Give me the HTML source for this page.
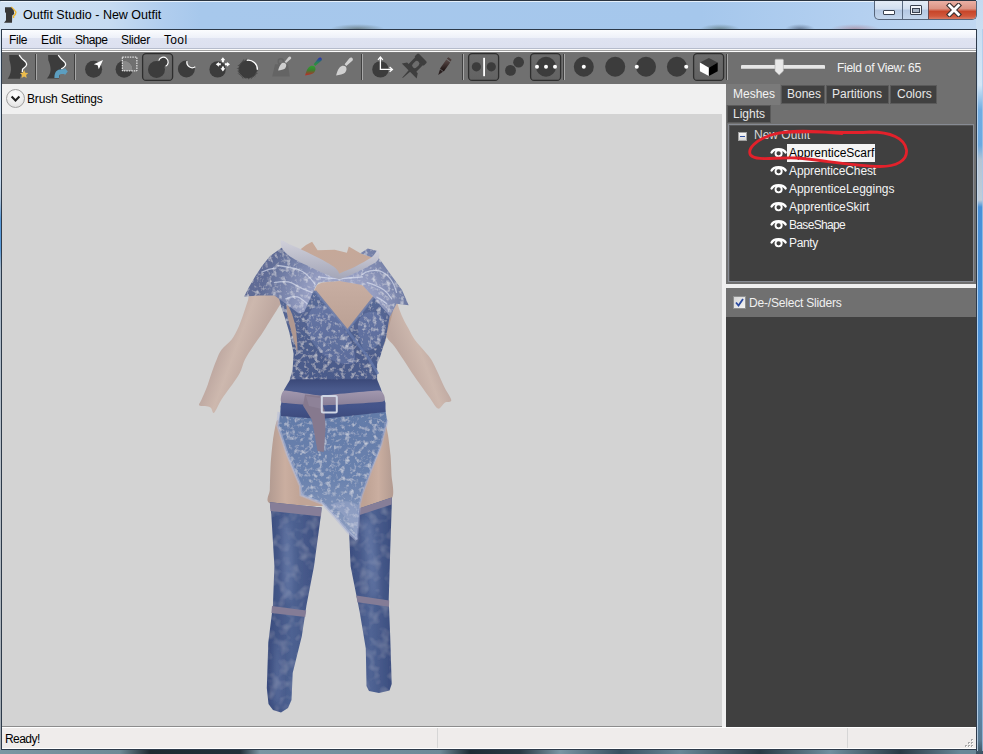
<!DOCTYPE html>
<html><head><meta charset="utf-8">
<style>
*{margin:0;padding:0;box-sizing:border-box}
html,body{width:983px;height:754px;overflow:hidden;background:#3d5560}
body{position:relative;font-family:"Liberation Sans",sans-serif;font-size:12px}
.a{position:absolute}
.t{position:absolute;white-space:nowrap;line-height:1}
</style></head><body>
<!-- desktop strip bottom -->
<div class="a" style="left:0;top:749px;width:983px;height:5px;background:linear-gradient(90deg,#7c97a3 0,#6e8a96 120px,#1f2a30 150px,#22303a 240px,#7a96a3 260px,#6d8a98 440px,#1e2c34 470px,#2a3a44 520px,#7a96a4 560px,#385060 620px,#6a8898 680px,#2a3a44 760px,#7090a0 830px,#2a3a44 900px,#6a8898 960px)"></div>
<!-- window frame (glass) -->
<div class="a" style="left:0;top:0;width:983px;height:750px;background:#a9c9ec;border-top:1px solid #2a3440"></div>
<!-- title glow -->
<div class="a" style="left:0;top:1px;width:983px;height:28px;background:linear-gradient(90deg,#d0e1f3 0,#c6dbf1 110px,#b0cdee 165px,#a7c8ec 200px,#a5c7ec 700px,#b4d0f0 860px,#c0d8f2 975px)"></div>
<div class="a" style="left:330px;top:24px;width:55px;height:5px;background:radial-gradient(ellipse at 50% 100%,rgba(70,80,70,.55),rgba(70,80,70,0) 70%)"></div>
<div class="a" style="left:700px;top:24px;width:40px;height:5px;background:radial-gradient(ellipse at 50% 100%,rgba(60,80,70,.5),rgba(60,80,70,0) 70%)"></div>
<div class="a" style="left:785px;top:24px;width:30px;height:5px;background:radial-gradient(ellipse at 50% 100%,rgba(40,50,70,.5),rgba(40,50,70,0) 70%)"></div>
<div class="a" style="left:830px;top:24px;width:50px;height:5px;background:radial-gradient(ellipse at 50% 100%,rgba(160,60,60,.35),rgba(160,60,60,0) 70%)"></div>
<!-- right frame -->
<div class="a" style="left:976px;top:0;width:7px;height:754px;background:linear-gradient(180deg,#c4daf0 0,#d4e6f6 85px,#70ace2 110px,#6aa8e0 145px,#b4c4d4 160px,#c0ccd8 200px,#4890d8 207px,#4890d8 660px,#5a88b0 700px,#5a7a92 740px,#3a5060 754px)"></div>
<div class="a" style="left:976px;top:29px;width:1px;height:722px;background:#2e3c4c"></div>
<div class="a" style="left:977px;top:29px;width:1px;height:722px;background:#c8dcf0;opacity:.8"></div>
<div class="a" style="left:982px;top:29px;width:1px;height:722px;background:#a8c8e8;opacity:.7"></div>
<!-- app icon -->
<div class="a" style="left:1px;top:1px;width:975px;height:1px;background:rgba(245,250,255,.8)"></div>
<svg class="a" style="left:0;top:0" width="20" height="26" viewBox="0 0 20 26">
<path d="M11.2 7.1 L14.4 10.2 L15.9 12.2 L15.2 14.6 L13.5 16.2 L13.6 18" fill="none" stroke="#f0b830" stroke-width="1.4"/>
<path d="M5 7.2 H11 L13.8 10.4 L14.2 13.9 L12.2 15.6 L12 22.7 H4 L6 20.3 V13.2 L5 12 Z" fill="#383838"/>
</svg>
<div class="t" style="left:23px;top:9px;font-size:12.5px;color:#000">Outfit Studio - New Outfit</div>
<!-- caption buttons -->
<div class="a" style="left:874px;top:1px;width:103px;height:19px;border:1px solid #56657a;border-top:none;border-radius:0 0 5px 5px;overflow:hidden;background:linear-gradient(#e4ecf6,#d2dff0 45%,#b4c8e2 50%,#c4d6ec)">
  <div class="a" style="left:27px;top:0;width:1px;height:19px;background:#5a6a80"></div>
  <div class="a" style="left:54px;top:0;width:48px;height:19px;background:linear-gradient(#eab0a4,#dc9484 40%,#c8462a 55%,#d0583c 80%,#dc8874)"></div>
  <div class="a" style="left:53px;top:0;width:1px;height:19px;background:#6a4a50"></div>
</div>
<div class="a" style="left:883px;top:10px;width:12px;height:5px;background:#fff;border:1px solid #3a4250;border-radius:1px"></div>
<div class="a" style="left:910px;top:5px;width:12px;height:10px;border:1px solid #3a4250;border-radius:1px;background:#f4f6fa"></div>
<div class="a" style="left:912px;top:8px;width:8px;height:5px;border:1px solid #3a4250;background:#a8b4c4"></div>
<svg class="a" style="left:946px;top:3px" width="16" height="14" viewBox="0 0 16 14"><path d="M3.5 2.5 L12.5 11.5 M12.5 2.5 L3.5 11.5" stroke="#3a3030" stroke-width="5" stroke-linecap="square"/><path d="M3.5 2.5 L12.5 11.5 M12.5 2.5 L3.5 11.5" stroke="#fff" stroke-width="2.8" stroke-linecap="square"/></svg>
<div class="a" style="left:0;top:29px;width:1px;height:721px;background:linear-gradient(#dce8f4,#c8dcf0 150px,#b0c4d8 170px,#5a9ad8 190px,#5a9ad8 220px,#a8b8c8 240px,#b8c0c8 440px,#a0a8b0 740px)"></div>
<!-- client area -->
<div class="a" style="left:1px;top:29px;width:976px;height:721px;border:1px solid #2d3a4a;background:#f0f0f0"></div>
<!-- menu bar -->
<div class="a" style="left:2px;top:30px;width:974px;height:19px;background:linear-gradient(#fbfcfe,#eef1f9 40%,#dfe3f1 45%,#dce0ef)"></div>
<div class="a" style="left:2px;top:48px;width:974px;height:1px;background:#b6bccc"></div>
<div class="a" style="left:2px;top:49px;width:974px;height:1px;background:#fafafa"></div>
<div class="a" style="left:2px;top:50px;width:974px;height:1px;background:#a0a0a0"></div>
<div class="a" style="left:2px;top:51px;width:974px;height:1px;background:#fcfcfc"></div>
<div class="t" style="left:9px;top:34px;color:#000;letter-spacing:-0.3px">File</div>
<div class="t" style="left:41px;top:34px;color:#000">Edit</div>
<div class="t" style="left:75px;top:34px;color:#000;letter-spacing:-0.45px">Shape</div>
<div class="t" style="left:121px;top:34px;color:#000;letter-spacing:-0.3px">Slider</div>
<div class="t" style="left:164px;top:34px;color:#000;letter-spacing:0.35px">Tool</div>
<!-- toolbar -->
<div class="a" style="left:2px;top:52px;width:974px;height:32px;background:#707070"></div>
<svg class="a" style="left:0;top:52px" width="983" height="32" viewBox="0 52 983 32">
<defs>
<linearGradient id="btnbg" x1="0" y1="0" x2="0" y2="1"><stop offset="0" stop-color="#6c6c6c"/><stop offset="1" stop-color="#626262"/></linearGradient>
<linearGradient id="cbr" x1="0" y1="0" x2="0" y2="1"><stop offset="0" stop-color="#2030c0"/><stop offset="0.35" stop-color="#30a030"/><stop offset="0.65" stop-color="#2e9a2e"/><stop offset="1" stop-color="#c03030"/></linearGradient>
<linearGradient id="pencil" x1="0" y1="0" x2="0" y2="1"><stop offset="0" stop-color="#5a4a48"/><stop offset="1" stop-color="#1a1010"/></linearGradient>
</defs>
<rect x="2" y="52" width="974" height="1" fill="#777"/>
<!-- separators -->
<g fill="#404040"><rect x="35" y="54" width="1" height="26"/><rect x="74" y="54" width="1" height="26"/><rect x="361" y="54" width="1" height="26"/><rect x="462" y="54" width="1" height="26"/><rect x="563" y="54" width="1" height="26"/><rect x="726" y="54" width="1" height="26"/></g>
<g fill="#a8a8a8"><rect x="36" y="54" width="1" height="26"/><rect x="75" y="54" width="1" height="26"/><rect x="362" y="54" width="1" height="26"/><rect x="463" y="54" width="1" height="26"/><rect x="564" y="54" width="1" height="26"/><rect x="727" y="54" width="1" height="26"/></g>
<!-- selected buttons -->
<g fill="url(#btnbg)" stroke="#2e2e2e" stroke-width="1.3">
<rect x="142.6" y="53.6" width="30" height="26.8" rx="3.5"/>
<rect x="468.6" y="53.6" width="30" height="26.8" rx="3.5"/>
<rect x="530.6" y="53.6" width="30" height="26.8" rx="3.5"/>
<rect x="693.6" y="53.6" width="30" height="26.8" rx="3.5"/>
</g>
<!-- icon 1 -->
<path d="M9.2 55 H19.1 C20.5 56.5 21.5 58.6 23.5 60 C25.5 61.5 26.8 62.8 26.6 64.8 C26.4 66.6 24.4 67.6 22.9 68.8 L22.1 71.5 L19.9 78.7 H7.6 C9 77 10.6 74 11 70 C11.2 67 10.4 63 9.4 60 Z" fill="#3c3c3c"/>
<path d="M19.1 55 C20.5 56.5 21.5 58.6 23.5 60 C25.5 61.5 26.8 62.8 26.6 64.8 C26.4 66.6 24.4 67.6 22.9 68.8 C22.2 69.5 22.3 71 22.3 72" fill="none" stroke="#fff" stroke-width="1.3"/>
<path d="M24.10 70.00 L25.33 72.70 L28.28 73.04 L26.10 75.05 L26.69 77.96 L24.10 76.50 L21.51 77.96 L22.10 75.05 L19.92 73.04 L22.87 72.70 Z" fill="#ecbc4c"/>
<!-- icon 2 -->
<path d="M48.1 55.1 H58.2 C59.6 56.6 60.4 58.6 62.4 60 C64.4 61.5 65.8 62.8 65.6 64.8 C65.4 66.6 63.4 67.8 61.2 68.9 L59 78.5 H46.8 C48.5 76.5 50.3 74 50.6 70 C50.8 67 49.6 63 48.3 60.2 Z" fill="#3c3c3c"/>
<path d="M58.2 55.1 C59.6 56.6 60.4 58.6 62.4 60 C64.4 61.5 65.8 62.8 65.6 64.8 C65.4 66.6 63.4 67.8 61.2 68.9" fill="none" stroke="#fff" stroke-width="1.3"/>
<path d="M54.4 78 C54.4 72 57 69.3 61.5 69.3 L64.6 69.3 L64.6 67.8 L67.8 71.4 L64.6 75.4 L64.6 74 L61.5 74 C59.5 74 59 75.5 59 78 Z" fill="#5c9ec0"/>
<!-- circle icons -->
<g fill="#3c3c3c">
<circle cx="93.6" cy="69.3" r="8.5"/>
<circle cx="124.1" cy="69.3" r="8.5"/>
<circle cx="156.5" cy="69.5" r="8.5"/>
<circle cx="217.6" cy="69.4" r="8.2"/>
<circle cx="380.4" cy="69.4" r="8.2"/>
<circle cx="476.4" cy="66.8" r="4.6"/><circle cx="491.3" cy="66.8" r="4.6"/>
<circle cx="510.5" cy="70.4" r="5.4"/><circle cx="518.6" cy="62.2" r="5.4"/>
<circle cx="546" cy="66.8" r="10"/>
<circle cx="583.8" cy="66.8" r="10"/>
<circle cx="615.2" cy="66.8" r="10"/>
<circle cx="646" cy="66.8" r="10"/>
<circle cx="676.9" cy="66.8" r="10"/>
</g>
<!-- moon -->
<mask id="moonm"><rect x="170" y="52" width="40" height="32" fill="#fff"/><circle cx="192.2" cy="61.6" r="5.4" fill="#000"/></mask>
<circle cx="186.4" cy="69.1" r="8.5" fill="#3c3c3c" mask="url(#moonm)"/>
<path d="M187 61.2 A5.4 5.4 0 0 0 195.3 66.8" fill="none" stroke="#fff" stroke-width="1.3"/>
<!-- arrow cursor -->
<path d="M103 60 L93.8 64.2 L97.6 65.3 L98.8 69.2 Z" fill="#fff"/>
<!-- select dashed -->
<path d="M124.1 60.8 A8.5 8.5 0 0 1 132.6 69.3 L132.6 70.9 L122.3 70.9 L122.3 60.9 Z" fill="#8a8a8a"/>
<rect x="122.3" y="57.1" width="14.6" height="13.8" fill="none" stroke="#fff" stroke-width="1" stroke-dasharray="1.5 1"/>
<!-- brush ring -->
<circle cx="163.4" cy="62" r="4.8" fill="#3c3c3c"/>
<path d="M158.8 60.6 A4.8 4.8 0 1 1 165.6 66.3" fill="none" stroke="#fff" stroke-width="1.2"/>
<!-- move arrows -->
<g fill="#fff"><path transform="translate(222.9 64.3) rotate(0)" d="M0 -7.1 L2.4 -4 H1 V-2.1 H-1 V-4 H-2.4 Z"/><path transform="translate(222.9 64.3) rotate(90)" d="M0 -7.1 L2.4 -4 H1 V-2.1 H-1 V-4 H-2.4 Z"/><path transform="translate(222.9 64.3) rotate(180)" d="M0 -7.1 L2.4 -4 H1 V-2.1 H-1 V-4 H-2.4 Z"/><path transform="translate(222.9 64.3) rotate(270)" d="M0 -7.1 L2.4 -4 H1 V-2.1 H-1 V-4 H-2.4 Z"/></g>
<!-- inflate spiky -->
<circle cx="247.9" cy="69.1" r="8.6" fill="#3c3c3c"/>
<path d="M255.89 69.45L258.42 70.58L255.68 70.97ZM255.75 70.66L257.85 72.10L255.30 72.13ZM255.42 71.84L257.87 73.86L254.76 73.22ZM254.91 72.95L256.41 74.90L254.05 74.22ZM254.24 73.97L255.86 76.54L253.20 75.09ZM253.43 74.88L254.50 77.49L252.22 75.83ZM252.48 75.66L252.95 78.05L251.15 76.41ZM251.43 76.28L251.74 79.26L250.00 76.82ZM250.30 76.73L250.02 79.13L248.80 77.05ZM249.11 77.01L248.50 79.85L247.58 77.09ZM247.89 77.10L246.90 79.34L246.36 76.95ZM246.67 77.00L245.34 79.10L245.18 76.62ZM245.48 76.73L243.68 78.99L244.07 76.12ZM244.35 76.27L241.95 78.68L243.05 75.46ZM243.30 75.64L241.15 76.96L242.13 74.65ZM242.35 74.87L239.94 75.93L241.36 73.70ZM241.54 73.95L238.54 74.91L240.73 72.65ZM240.88 72.93L237.38 73.59L240.27 71.52ZM240.38 71.82L237.29 71.81L240.00 70.33ZM240.05 70.64L237.24 70.14L239.90 69.11ZM239.91 69.42L236.45 68.47L239.99 67.89ZM239.95 68.20L237.86 66.98L240.27 66.70ZM240.18 67.00L237.31 65.10L240.72 65.57ZM240.59 65.85L238.69 63.90L241.34 64.52ZM241.17 64.78L239.74 62.68L242.12 63.57ZM241.91 63.80L240.83 61.53L243.03 62.76ZM242.78 62.95L241.93 60.34L244.05 62.09ZM243.78 62.24L243.05 58.94L245.16 61.58ZM244.87 61.70L244.89 59.11L246.34 61.25ZM246.03 61.32L246.38 58.25L247.55 61.11Z" fill="#3c3c3c"/>
<path d="M246.7 60.3 A9.2 9.2 0 0 1 257.4 69.8" fill="none" stroke="#fff" stroke-width="1.3"/>
<!-- mask weight -->
<path d="M275 64.3 H288 L289.8 76.6 H272.2 Z" fill="#646464"/>
<circle cx="280.8" cy="61.4" r="2.6" fill="none" stroke="#646464" stroke-width="1.4"/>
<g transform="translate(40.14,11.63) scale(0.78)"><path d="M313.6 64.2 L318.2 58.6 C318.8 57.8 320 57.3 320.9 57.7 C321.9 58.3 322.2 59.5 321.6 60.4 L315.3 65.9 Z" fill="#cfcfcf"/><path d="M305.1 75.4 C306 72.5 306.6 69.6 308.6 67.4 C310.4 65.4 313.2 65.2 314.6 66.6 C316 68 315.8 70.8 314 72.8 C312.2 74.6 308.4 74.8 305.1 75.4 Z" fill="#cfcfcf"/></g>
<linearGradient id="cbr1" x1="0" y1="0" x2="0" y2="1"><stop offset="0" stop-color="#2a2ab8"/><stop offset="0.55" stop-color="#2a7a60"/><stop offset="1" stop-color="#2e9a2e"/></linearGradient>
<linearGradient id="cbr2" x1="0" y1="0" x2="0" y2="1"><stop offset="0" stop-color="#2fa02f"/><stop offset="0.45" stop-color="#3a8030"/><stop offset="1" stop-color="#c02828"/></linearGradient>
<path d="M313.6 64.2 L318.2 58.6 C318.8 57.8 320 57.3 320.9 57.7 C321.9 58.3 322.2 59.5 321.6 60.4 L315.3 65.9 Z" fill="url(#cbr1)"/><path d="M305.1 75.4 C306 72.5 306.6 69.6 308.6 67.4 C310.4 65.4 313.2 65.2 314.6 66.6 C316 68 315.8 70.8 314 72.8 C312.2 74.6 308.4 74.8 305.1 75.4 Z" fill="url(#cbr2)"/>
<g transform="translate(31,0)"><path d="M313.6 64.2 L318.2 58.6 C318.8 57.8 320 57.3 320.9 57.7 C321.9 58.3 322.2 59.5 321.6 60.4 L315.3 65.9 Z" fill="#d0d0d0"/><path d="M305.1 75.4 C306 72.5 306.6 69.6 308.6 67.4 C310.4 65.4 313.2 65.2 314.6 66.6 C316 68 315.8 70.8 314 72.8 C312.2 74.6 308.4 74.8 305.1 75.4 Z" fill="#d0d0d0"/></g>
<!-- transform axes -->
<g stroke="#fff" stroke-width="1.3" fill="none"><path d="M380.4 57.5 V69.4 H391.8"/><path d="M378 59.8 L380.4 57 L382.8 59.8"/><path d="M389.6 67 L392.4 69.4 L389.6 71.8"/></g>
<!-- pin -->
<g transform="translate(413.5 66.8) rotate(45)" fill="#3e3e3e">
<rect x="-6.5" y="-13" width="13" height="5.5" rx="1.5"/>
<rect x="-5.5" y="-9" width="11" height="11.5"/>
<path d="M-7.5 1.5 H7.5 L10.5 6 H-10.5 Z"/>
<path d="M-1.1 5.5 H1.1 L0.3 15.5 H-0.3 Z"/>
<rect x="-2.6" y="-7.2" width="5.2" height="8" rx="2.6" fill="#6c6c6c"/>
</g>
<!-- pencil -->
<path d="M446.4 59.6 L450.2 62.6 L443.8 71.4 L440 68.4 Z" fill="url(#pencil)"/>
<path d="M440 69.2 L443 71.8 L438.2 75 Z" fill="#2a2020"/>
<path d="M446.8 58.4 L448.4 57.2 L451.6 59.8 L450.6 61.4 Z" fill="#4a3c3a"/>
<!-- mirror bar -->
<rect x="483.2" y="57.8" width="1.8" height="18.4" fill="#fff"/>
<!-- dots -->
<g fill="#fff"><circle cx="537" cy="66.8" r="2"/><circle cx="546" cy="66.8" r="2"/><circle cx="555" cy="66.8" r="2"/><circle cx="583.8" cy="66.8" r="2"/><circle cx="636.8" cy="66.8" r="2"/><circle cx="686.2" cy="66.8" r="2"/></g>
<!-- cube -->
<path d="M708.9 58.1 L717.7 62.6 L708.9 67.8 L699.9 62.6 Z" fill="#404040"/>
<path d="M699.9 62.6 L708.9 67.8 L708.9 75.9 L699.9 71.2 Z" fill="#fff"/>
<path d="M717.7 62.6 L708.9 67.8 L708.9 75.9 L717.7 71.2 Z" fill="#000"/>
<!-- slider -->
<rect x="741" y="65" width="84" height="4" rx="1" fill="#e6e6e6"/>
<rect x="741" y="68" width="84" height="1" fill="#c8c8c8"/>
<path d="M775 60.2 Q775 59.2 776 59.2 H782.4 Q783.4 59.2 783.4 60.2 V71 L779.2 75 L775 71 Z" fill="#e8e8e8" stroke="#b0b0b0" stroke-width="0.6"/>
</svg>

<div class="t" style="left:837px;top:62px;color:#f4f4f4;letter-spacing:-0.27px">Field of View: 65</div>
<!-- brush settings bar -->
<div class="a" style="left:2px;top:84px;width:724px;height:30px;background:#f0f0f0"></div>
<div class="a" style="left:6px;top:89px;width:19px;height:19px;border-radius:50%;border:1px solid #a0a0a0;background:radial-gradient(circle at 50% 30%,#ffffff,#ececec 60%,#d8d8d8)"></div>
<svg class="a" style="left:6px;top:89px" width="19" height="19"><path d="M5.6 7.6 L9.5 11.5 L13.4 7.6" fill="none" stroke="#1e1e1e" stroke-width="2.1"/></svg>
<div class="t" style="left:27px;top:93px;color:#000;letter-spacing:-0.17px">Brush Settings</div>
<!-- viewport -->
<div class="a" style="left:2px;top:114px;width:720px;height:612px;background:#d3d3d3"></div>
<div class="a" style="left:2px;top:726px;width:724px;height:1px;background:#8c8c8c"></div>
<svg class="a" style="left:0;top:0" width="983" height="754" viewBox="0 0 983 754">
<defs>
<linearGradient id="armL" gradientUnits="userSpaceOnUse" x1="205" y1="370" x2="245" y2="385"><stop offset="0" stop-color="#b8a29c"/><stop offset="0.5" stop-color="#cdb8ae"/><stop offset="1" stop-color="#bea8a0"/></linearGradient>
<linearGradient id="armR" gradientUnits="userSpaceOnUse" x1="450" y1="370" x2="410" y2="385"><stop offset="0" stop-color="#b8a29c"/><stop offset="0.5" stop-color="#cdb8ae"/><stop offset="1" stop-color="#bea8a0"/></linearGradient>
<linearGradient id="skinT" x1="0" y1="0" x2="0" y2="1"><stop offset="0" stop-color="#c6a898"/><stop offset="1" stop-color="#c2a89c"/></linearGradient>
<linearGradient id="chestG" x1="0" y1="0" x2="0" y2="1"><stop offset="0" stop-color="#c8aea2"/><stop offset="1" stop-color="#baa094"/></linearGradient>
<linearGradient id="thighG" gradientUnits="userSpaceOnUse" x1="270" y1="0" x2="300" y2="0"><stop offset="0" stop-color="#b49c92"/><stop offset="0.5" stop-color="#caaea0"/><stop offset="1" stop-color="#c0a496"/></linearGradient>
<linearGradient id="thighGR" gradientUnits="userSpaceOnUse" x1="392" y1="0" x2="365" y2="0"><stop offset="0" stop-color="#b49c92"/><stop offset="0.5" stop-color="#caaea0"/><stop offset="1" stop-color="#bea294"/></linearGradient>
<linearGradient id="bodyG" x1="0" y1="0" x2="0" y2="1"><stop offset="0" stop-color="#586a98"/><stop offset="0.6" stop-color="#4e5e8c"/><stop offset="1" stop-color="#4a5a8a"/></linearGradient>
<radialGradient id="capeG" gradientUnits="userSpaceOnUse" cx="340" cy="305" r="80" fx="340" fy="310"><stop offset="0" stop-color="#a6acce"/><stop offset="0.45" stop-color="#969ec2"/><stop offset="0.8" stop-color="#727ea6"/><stop offset="1" stop-color="#606c96"/></radialGradient>
<linearGradient id="skirtG" x1="0" y1="0" x2="0" y2="1"><stop offset="0" stop-color="#627aa8"/><stop offset="0.55" stop-color="#6a82ae"/><stop offset="1" stop-color="#90a0c2"/></linearGradient>
<linearGradient id="stockLG" gradientUnits="userSpaceOnUse" x1="268" y1="0" x2="320" y2="0"><stop offset="0" stop-color="#3a4c7e"/><stop offset="0.45" stop-color="#4e6292"/><stop offset="1" stop-color="#3c4e80"/></linearGradient>
<linearGradient id="stockRG" gradientUnits="userSpaceOnUse" x1="350" y1="0" x2="392" y2="0"><stop offset="0" stop-color="#3c4e80"/><stop offset="0.5" stop-color="#506494"/><stop offset="1" stop-color="#3a4c7e"/></linearGradient>
<linearGradient id="beltG" x1="0" y1="0" x2="0" y2="1"><stop offset="0" stop-color="#a298ae"/><stop offset="1" stop-color="#8a8098"/></linearGradient>
<linearGradient id="collarG" x1="0" y1="0" x2="0" y2="1"><stop offset="0" stop-color="#d0d0da"/><stop offset="1" stop-color="#a4a6b8"/></linearGradient>
<filter id="tex" x="0" y="0" width="100%" height="100%" filterUnits="objectBoundingBox"><feTurbulence type="fractalNoise" baseFrequency="0.22" numOctaves="3" seed="9" result="n"/><feColorMatrix in="n" type="matrix" values="0 0 0 0 1  0 0 0 0 1  0 0 0 0 1  0 0 0 1.2 -0.6" result="w"/><feComposite in="w" in2="SourceGraphic" operator="in" result="wc"/><feMerge><feMergeNode in="SourceGraphic"/><feMergeNode in="wc"/></feMerge></filter>
<filter id="texd" x="0" y="0" width="100%" height="100%" filterUnits="objectBoundingBox"><feTurbulence type="fractalNoise" baseFrequency="0.18" numOctaves="3" seed="2" result="n"/><feColorMatrix in="n" type="matrix" values="0 0 0 0 0.15  0 0 0 0 0.2  0 0 0 0 0.35  0 0 0 1.6 -0.75" result="w"/><feComposite in="w" in2="SourceGraphic" operator="in" result="wc"/><feMerge><feMergeNode in="SourceGraphic"/><feMergeNode in="wc"/></feMerge></filter>
<filter id="tex2" x="0" y="0" width="100%" height="100%" filterUnits="objectBoundingBox"><feTurbulence type="fractalNoise" baseFrequency="0.1" numOctaves="2" seed="5" result="n"/><feColorMatrix in="n" type="matrix" values="0 0 0 0 0.72  0 0 0 0 0.78  0 0 0 0 0.92  0 0 0 0.35 -0.16" result="w"/><feComposite in="w" in2="SourceGraphic" operator="in" result="wc"/><feMerge><feMergeNode in="SourceGraphic"/><feMergeNode in="wc"/></feMerge></filter>
<linearGradient id="waistG" x1="0" y1="0" x2="0" y2="1"><stop offset="0" stop-color="#3a4878"/><stop offset="0.25" stop-color="#4a5a8c"/><stop offset="0.7" stop-color="#44548a"/><stop offset="1" stop-color="#3c4a7c"/></linearGradient>
<filter id="blur3" x="-50%" y="-20%" width="200%" height="140%"><feGaussianBlur stdDeviation="3"/></filter>
</defs>
<path d="M252.0 288.0C246.5 290.0 249.6 295.5 248.1 300.0C246.6 304.5 244.8 310.2 243.1 314.9C241.4 319.6 240.0 324.0 238.1 328.1C236.2 332.2 234.3 336.2 231.5 339.8C228.7 343.4 224.0 346.4 221.5 349.7C219.0 353.0 218.2 355.8 216.6 359.7C214.9 363.6 213.3 368.2 211.6 372.9C209.9 377.6 208.3 383.4 206.6 387.8C204.9 392.2 202.8 396.6 201.6 399.5C200.3 402.4 198.5 404.2 199.1 405.3C199.7 406.4 203.1 405.7 205.0 406.1C206.9 406.5 209.3 406.6 210.8 407.7C212.3 408.8 212.3 414.1 214.1 412.7C215.9 411.3 218.9 403.6 221.5 399.5C224.1 395.4 226.8 392.2 229.8 387.8C232.9 383.4 237.3 377.6 239.8 372.9C242.3 368.2 242.6 364.1 244.8 359.7C247.0 355.3 250.2 350.5 253.0 346.4C255.8 342.2 258.5 338.9 261.3 334.8C264.1 330.7 266.8 325.9 269.6 321.5C272.4 317.1 275.8 311.8 277.9 308.2C280.0 304.6 281.5 303.4 282.0 300.0C282.5 296.6 286.0 290.0 281.0 288.0C276.0 286.0 257.5 286.0 252.0 288.0Z" fill="url(#armL)"/>
<path d="M396.0 290.0C397.2 292.2 396.6 298.9 397.5 303.0C398.4 307.1 399.7 310.7 401.5 314.9C403.3 319.1 406.0 324.0 408.2 328.1C410.4 332.2 412.0 335.9 414.8 339.8C417.6 343.7 422.0 348.1 424.8 351.4C427.6 354.7 429.2 356.1 431.4 359.7C433.6 363.3 435.8 368.2 438.0 372.9C440.2 377.6 442.5 383.2 444.7 387.8C446.9 392.4 451.3 397.8 451.3 400.3C451.3 402.8 446.9 401.4 444.7 402.8C442.5 404.2 440.5 409.4 438.0 408.6C435.5 407.8 432.5 401.5 429.7 397.8C426.9 394.1 424.3 390.4 421.4 386.2C418.4 382.0 415.0 377.3 412.0 372.9C409.0 368.5 406.4 364.1 403.5 359.7C400.6 355.3 397.3 350.3 394.5 346.4C391.7 342.5 387.9 340.3 386.6 336.4C385.4 332.5 386.4 328.2 387.0 323.0C387.6 317.8 389.5 310.5 390.0 305.0C390.5 299.5 389.0 292.5 390.0 290.0C391.0 287.5 394.8 287.8 396.0 290.0Z" fill="url(#armR)"/>
<path d="M392.0 300.0C391.3 301.7 389.9 313.9 389.0 320.0C388.1 326.1 387.4 332.2 386.6 336.4C385.8 340.6 383.8 346.1 384.0 345.0C384.2 343.9 386.5 335.8 388.0 330.0C389.5 324.2 392.3 315.0 393.0 310.0C393.7 305.0 392.7 298.3 392.0 300.0Z" fill="#b49a8e"/>
<path d="M277.7 420.0C276.2 418.4 273.7 435.5 273.0 440.0C272.3 444.5 270.9 460.0 270.6 465.0C270.3 470.0 269.9 486.2 269.8 490.0C269.7 493.8 264.6 501.4 269.8 503.0C275.0 504.6 317.0 506.3 321.6 506.0C326.2 505.7 317.9 501.0 316.0 500.0C314.1 499.0 304.5 497.4 302.9 496.0C301.3 494.6 301.9 489.9 300.4 485.9C298.9 481.9 290.1 462.3 287.8 455.7C285.5 449.1 279.2 421.6 277.7 420.0Z" fill="url(#thighG)"/>
<path d="M384.0 418.0C384.7 416.9 387.4 431.3 388.0 435.0C388.6 438.7 390.1 451.0 390.5 455.0C390.9 459.0 391.4 470.7 391.5 475.0C391.6 479.3 395.2 494.6 392.0 498.0C388.8 501.4 363.1 508.8 359.7 509.0C356.3 509.2 358.1 501.9 358.3 500.0C358.5 498.1 360.7 492.9 362.0 490.0C363.3 487.1 369.1 475.2 371.0 470.8C372.9 466.4 379.7 450.9 381.0 445.6C382.3 440.3 383.3 419.1 384.0 418.0Z" fill="url(#thighGR)"/>
<path d="M299.3 250.3 L306.0 245.0 L312.1 241.7 L317.6 250.3 L334.7 249.7 L346.9 252.7 L348.8 246.6 L360.4 253.3 L374.0 258.0 L366.0 280.0 L320.0 282.0 L300.0 262.0Z" fill="url(#skinT)"/>
<path d="M279.0 298.0 L281.0 306.0 L285.0 318.0 L289.4 332.4 L293.6 353.7 L292.6 370.0 L289.6 380.0 L377.1 380.0 L377.1 364.0 L380.0 357.3 L385.9 338.3 L390.2 313.5 L396.0 300.0 L374.0 296.0 L347.2 330.3 L314.4 290.2Z" fill="url(#bodyG)" filter="url(#tex)"/>
<path d="M287.0 305.0C287.8 304.7 290.5 309.8 292.0 314.0C293.5 318.2 295.1 323.8 296.0 330.0C296.9 336.2 297.6 348.3 297.5 351.0C297.4 353.7 296.6 349.5 295.5 346.0C294.4 342.5 292.3 335.0 291.0 330.0C289.7 325.0 288.2 320.2 287.5 316.0C286.8 311.8 286.2 305.3 287.0 305.0Z" fill="#b09890"/>
<path d="M314.4 290.2 L317.0 285.0 L322.0 282.5 L339.5 281.0 L356.0 282.5 L366.0 287.0 L375.6 296.0 L347.2 330.3Z" fill="url(#chestG)"/>
<path d="M310 312 C314 304 324 303 330 310 C338 318 342 326 347 334 C352 342 356 352 355 362 C350 366 338 364 328 358 C316 350 308 338 307 326 C306 320 308 316 310 312 Z" fill="#8090c0" opacity="0.35" filter="url(#tex)"/>
<path d="M360 318 C366 310 376 310 382 316 C386 322 385 334 380 342 C376 348 370 352 364 350 C360 344 358 336 358 328 C358 324 358 321 360 318 Z" fill="#8090c0" opacity="0.35" filter="url(#tex)"/>

<path d="M315 291 L347.3 330.6 L368 357 L378 374" fill="none" stroke="#6478aa" stroke-width="2.6" opacity="0.8"/>
<path d="M374 297 L347.3 330.6" fill="none" stroke="#6478aa" stroke-width="2.2" opacity="0.8"/>


<path d="M282.2 241.1 L283.4 246.6 L270.0 256.0 L262.0 266.0 L255.6 275.8 L249.0 287.0 L244.2 296.4 L258.7 295.6 L274.4 295.6 L285.8 303.7 L298.8 313.5 L304.2 312.1 L315.1 287.4 L318.4 282.6 L339.5 281.0 L362.3 285.0 L373.7 297.2 L380.2 305.3 L390.2 316.5 L396.5 303.7 L408.7 305.3 L402.0 290.0 L396.5 282.6 L383.5 264.6 L377.4 256.0 L377.4 250.9 L367.7 248.4 L360.4 253.3 L373.7 258.0 L339.0 275.0 L299.3 250.9Z" fill="url(#capeG)" filter="url(#tex)"/>
<g fill="none" stroke="#e8ecf8" stroke-width="1.3" opacity="0.6" stroke-linecap="round">
<path d="M277.7 265.5 C284 266 292.3 267.9 297 269 C303.7 271.2 310 277 315.1 284.2"/>
<path d="M274.4 282.6 C280 281.5 287.4 281 292 283 C298.8 287.4 305 290 311.8 292.3"/>
<path d="M285.8 298.8 C290 297 295.6 295.6 300 298 C303 300 305 302 307 303.7"/>
<path d="M362.3 274.4 C366 271 373.7 269.5 380 271 C388.3 274 394 283 396.5 292.3"/>
<path d="M367.2 282.6 C372 284 380.2 287.4 384 290 C388 293 390 296 391.6 298.8"/>
<path d="M377 297.2 C380 299 384 301 386.7 303.7"/>
<path d="M318.4 276.9 C325 278 332 278.5 337.9 278.5 C345 278.5 355 277.5 362.3 276.9"/>
<path d="M262 272 C266 270 271 268.5 276 268"/>
</g>
<path d="M281.0 240.2C282.0 239.6 287.6 243.4 290.0 244.5C292.4 245.6 295.5 246.7 299.3 248.5C303.1 250.3 314.2 255.6 318.8 258.0C323.4 260.4 330.8 264.5 333.5 266.5C336.2 268.5 338.3 271.3 339.0 273.0C339.7 274.7 340.8 279.1 338.5 279.0C336.2 278.9 326.5 274.4 322.0 272.5C317.5 270.6 309.3 266.6 305.0 264.5C300.7 262.4 293.0 258.6 290.0 256.5C287.0 254.4 283.7 251.2 282.5 249.0C281.3 246.8 280.0 240.8 281.0 240.2Z" fill="url(#collarG)"/>
<path d="M339.0 274.0C341.1 272.3 351.1 268.8 355.5 266.5C359.9 264.2 369.1 259.2 372.0 257.0C374.9 254.8 376.4 250.3 377.4 250.0C378.4 249.7 379.7 253.4 379.5 255.0C379.3 256.6 379.0 259.7 376.0 262.0C373.0 264.3 361.8 269.7 357.0 272.0C352.2 274.3 342.4 278.7 340.0 279.0C337.6 279.3 336.9 275.7 339.0 274.0Z" fill="url(#collarG)"/>
<path d="M269.8 502.2 L321.6 507.6 L320.6 517.4 L314.0 566.2 L306.4 605.8 L301.8 636.3 L292.7 672.9 L291.5 700.0 L288.0 708.0 L281.0 712.5 L273.0 710.0 L268.5 704.0 L266.8 688.1 L268.3 642.4 L272.9 605.8 L274.4 566.2 L271.3 514.4Z" fill="url(#stockLG)" filter="url(#tex2)"/>
<path d="M359.7 508.3 L391.7 497.6 L391.7 506.8 L390.2 551.0 L388.7 599.7 L390.2 636.3 L391.7 684.0 L389.5 690.5 L379.0 693.0 L369.0 691.0 L366.5 686.0 L365.8 648.5 L359.7 611.9 L350.6 566.2 L349.0 529.6 L353.6 511.3Z" fill="url(#stockRG)" filter="url(#tex2)"/>

<path d="M287 520 C293 540 294 570 290 600 L284 600 C282 570 282 540 282 520 Z" fill="#7a8cb8" opacity="0.45" filter="url(#blur3)"/>
<path d="M370 520 C376 540 378 570 378 596 L372 596 C368 570 364 540 362 520 Z" fill="#7a8cb8" opacity="0.4" filter="url(#blur3)"/>
<path d="M278 640 C282 660 282 690 280 705 L274 703 C274 690 274 660 276 640 Z" fill="#7a8cb8" opacity="0.4" filter="url(#blur3)"/>
<path d="M269.8 502.2 L321.6 507.6 L321 516.5 L270.6 511 Z" fill="#867e98"/>
<path d="M359.7 508.3 L391.7 497.6 L391.7 504.5 L359.7 515 Z" fill="#867e98"/>
<path d="M272 606 L306.2 610.5 L305.2 617 L271.4 613 Z" fill="#847c96"/>
<path d="M356.2 595.5 L389.2 600.5 L389 606.8 L357.5 602.2 Z" fill="#847c96"/>
<path d="M281.2 406.0 L320.8 410.0 L384.3 405.0 L387.3 420.4 L381.0 445.6 L371.0 470.8 L362.0 495.0 L359.7 504.8 L356.7 539.7 L347.7 531.7 L335.8 517.8 L323.0 503.8 L301.0 495.0 L300.4 485.9 L287.8 455.7 L277.7 425.4Z" fill="url(#skirtG)" filter="url(#tex)"/>
<path d="M279 412 L277.7 425.4 L287.8 455.7 L300.4 485.9 L301 495 L323 503.8 L335.8 517.8 L347.7 531.7 L356.7 539.7" fill="none" stroke="#b4bcd8" stroke-width="3" opacity="0.55"/>
<path d="M356.7 539.7 L359.7 504.8 L362 495 L371 470.8 L381 445.6 L387.3 420.4" fill="none" stroke="#a8b2d4" stroke-width="2.5" opacity="0.45"/>
<path d="M330 505 C340 510 350 520 356 536 L358 505 C350 500 340 500 330 505 Z" fill="#a4aed0" opacity="0.4"/>
<path d="M290.3 379.2 L377.0 379.2 L380.7 388.3 L385.5 403.0 L385.5 412.0 L320.8 419.0 L281.0 416.0 L280.5 406.6 L284.2 389.5Z" fill="url(#waistG)"/>
<path d="M284.2 390.6C286.8 390.1 314.5 395.5 320.8 395.5C327.1 395.5 375.2 390.2 379.4 390.6C383.6 391.0 387.0 400.6 383.1 401.6C379.2 402.6 327.6 405.4 320.8 405.5C314.0 405.6 284.2 403.6 281.8 402.6C279.4 401.6 281.6 391.1 284.2 390.6Z" fill="url(#beltG)"/>
<path d="M305.0 394.4 L320.0 396.0 L324.5 410.0 L325.5 430.0 L323.8 452.0 L317.5 451.0 L312.0 420.0 L303.0 405.4Z" fill="#86798e"/>
<path d="M306 396 L320 398 L322 409 L309 406 Z" fill="#8e8298"/>
<rect x="321.8" y="396" width="15" height="16.5" rx="1.5" fill="none" stroke="#d0d6e4" stroke-width="2"/>
</svg>

<!-- right panel -->
<div class="a" style="left:726px;top:84px;width:250px;height:643px;background:#404040"></div>
<div class="a" style="left:726px;top:84px;width:250px;height:200px;background:#707070"></div>
<div class="a" style="left:726px;top:84px;width:54px;height:21px;background:#7a7a7a"></div>
<div class="t" style="left:733px;top:88px;color:#f4f4f4">Meshes</div>
<div class="a" style="left:781px;top:85px;width:44px;height:19px;background:#404040;border:1px solid #5a5a5a"></div>
<div class="t" style="left:787px;top:88px;color:#e8e8e8">Bones</div>
<div class="a" style="left:826px;top:85px;width:63px;height:19px;background:#404040;border:1px solid #5a5a5a"></div>
<div class="t" style="left:832px;top:88px;color:#e8e8e8">Partitions</div>
<div class="a" style="left:890px;top:85px;width:47px;height:19px;background:#404040;border:1px solid #5a5a5a"></div>
<div class="t" style="left:897px;top:88px;color:#e8e8e8">Colors</div>
<div class="a" style="left:727px;top:105px;width:44px;height:18px;background:#404040;border:1px solid #5a5a5a"></div>
<div class="t" style="left:733px;top:108px;color:#e8e8e8">Lights</div>
<!-- tree box -->
<div class="a" style="left:728px;top:124px;width:246px;height:158px;background:#404040;border:1px solid #878b93;box-shadow:inset 1px 1px 0 #555"></div>
<div class="a" style="left:738px;top:132px;width:9px;height:9px;background:linear-gradient(#f8f8f8,#d8d8d8);border:1px solid #a0a0a0"></div>
<div class="a" style="left:740px;top:136px;width:5px;height:1px;background:#3050a0"></div>
<div class="t" style="left:754px;top:129px;color:#d8d8d8">New Outfit</div>
<div class="a" style="left:787px;top:144px;width:88px;height:18px;background:#f4f4f4"></div>
<svg class="a" style="left:770px;top:146px" width="18" height="12" viewBox="0 0 18 12"><path d="M1.6 6.4 C3.6 2.2 13.4 2.2 15.6 6.4" fill="none" stroke="#fff" stroke-width="2.4" stroke-linecap="round"/><circle cx="8.6" cy="7.3" r="3.1" fill="none" stroke="#fff" stroke-width="1.9"/><circle cx="8.6" cy="7.3" r="1.2" fill="#404040"/></svg>
<div class="t" style="left:789px;top:147px;color:#000;letter-spacing:0px">ApprenticeScarf</div>
<svg class="a" style="left:770px;top:164px" width="18" height="12" viewBox="0 0 18 12"><path d="M1.6 6.4 C3.6 2.2 13.4 2.2 15.6 6.4" fill="none" stroke="#fff" stroke-width="2.4" stroke-linecap="round"/><circle cx="8.6" cy="7.3" r="3.1" fill="none" stroke="#fff" stroke-width="1.9"/><circle cx="8.6" cy="7.3" r="1.2" fill="#404040"/></svg>
<div class="t" style="left:789px;top:165px;color:#f4f4f4;letter-spacing:-0.11px">ApprenticeChest</div>
<svg class="a" style="left:770px;top:182px" width="18" height="12" viewBox="0 0 18 12"><path d="M1.6 6.4 C3.6 2.2 13.4 2.2 15.6 6.4" fill="none" stroke="#fff" stroke-width="2.4" stroke-linecap="round"/><circle cx="8.6" cy="7.3" r="3.1" fill="none" stroke="#fff" stroke-width="1.9"/><circle cx="8.6" cy="7.3" r="1.2" fill="#404040"/></svg>
<div class="t" style="left:789px;top:183px;color:#f4f4f4;letter-spacing:-0.04px">ApprenticeLeggings</div>
<svg class="a" style="left:770px;top:200px" width="18" height="12" viewBox="0 0 18 12"><path d="M1.6 6.4 C3.6 2.2 13.4 2.2 15.6 6.4" fill="none" stroke="#fff" stroke-width="2.4" stroke-linecap="round"/><circle cx="8.6" cy="7.3" r="3.1" fill="none" stroke="#fff" stroke-width="1.9"/><circle cx="8.6" cy="7.3" r="1.2" fill="#404040"/></svg>
<div class="t" style="left:789px;top:201px;color:#f4f4f4;letter-spacing:-0.07px">ApprenticeSkirt</div>
<svg class="a" style="left:770px;top:218px" width="18" height="12" viewBox="0 0 18 12"><path d="M1.6 6.4 C3.6 2.2 13.4 2.2 15.6 6.4" fill="none" stroke="#fff" stroke-width="2.4" stroke-linecap="round"/><circle cx="8.6" cy="7.3" r="3.1" fill="none" stroke="#fff" stroke-width="1.9"/><circle cx="8.6" cy="7.3" r="1.2" fill="#404040"/></svg>
<div class="t" style="left:789px;top:219px;color:#f4f4f4;letter-spacing:-0.68px">BaseShape</div>
<svg class="a" style="left:770px;top:236px" width="18" height="12" viewBox="0 0 18 12"><path d="M1.6 6.4 C3.6 2.2 13.4 2.2 15.6 6.4" fill="none" stroke="#fff" stroke-width="2.4" stroke-linecap="round"/><circle cx="8.6" cy="7.3" r="3.1" fill="none" stroke="#fff" stroke-width="1.9"/><circle cx="8.6" cy="7.3" r="1.2" fill="#404040"/></svg>
<div class="t" style="left:789px;top:237px;color:#f4f4f4;letter-spacing:-0.34px">Panty</div>
<svg class="a" style="left:0;top:0" width="983" height="300"><path d="M779 133 C810 130 850 134 870 132 C890 132 905 138 906.5 150 C907.5 161 896 166.5 880 166.5 C852 166 822 160 797 158 C776 157 756 161.5 750.5 155 C747 148.5 756 140 771 135 C790 129 818 131.5 842 133.5" fill="none" stroke="#e3212b" stroke-width="2.8" stroke-linecap="round"/></svg>
<!-- sash -->
<div class="a" style="left:722px;top:84px;width:4px;height:643px;background:#f0f0f0"></div>
<div class="a" style="left:726px;top:284px;width:250px;height:4px;background:#f0f0f0"></div>
<!-- slider panel -->
<div class="a" style="left:726px;top:288px;width:250px;height:29px;background:#707070"></div>
<div class="a" style="left:733px;top:296px;width:13px;height:13px;border:1px solid #8e8f8f;background:linear-gradient(135deg,#d6d6d6,#f4f4f4)"></div>
<svg class="a" style="left:733px;top:296px" width="13" height="13"><path d="M3 6.5 L5.5 9.5 L10 3" fill="none" stroke="#2a4aa0" stroke-width="1.8"/></svg>
<div class="t" style="left:749px;top:297px;color:#f0f0f0;letter-spacing:-0.19px">De-/Select Sliders</div>
<!-- status bar -->
<div class="a" style="left:2px;top:727px;width:974px;height:22px;background:#efeceb;border-top:1px solid #fff;border-bottom:1px solid #fff"></div>
<div class="a" style="left:437px;top:728px;width:1px;height:20px;background:#d6d6d6"></div>
<div class="a" style="left:847px;top:728px;width:1px;height:20px;background:#d6d6d6"></div>
<div class="t" style="left:5px;top:733px;color:#000;letter-spacing:-0.55px">Ready!</div>
<svg class="a" style="left:960px;top:735px" width="16" height="14"><g fill="#a8a8a8"><rect x="11" y="4" width="2" height="2"/><rect x="8" y="7" width="2" height="2"/><rect x="11" y="7" width="2" height="2"/><rect x="5" y="10" width="2" height="2"/><rect x="8" y="10" width="2" height="2"/><rect x="11" y="10" width="2" height="2"/></g><g fill="#fff"><rect x="12" y="5" width="1" height="1"/><rect x="9" y="8" width="1" height="1"/><rect x="12" y="8" width="1" height="1"/><rect x="6" y="11" width="1" height="1"/><rect x="9" y="11" width="1" height="1"/><rect x="12" y="11" width="1" height="1"/></g></svg>
</body></html>
